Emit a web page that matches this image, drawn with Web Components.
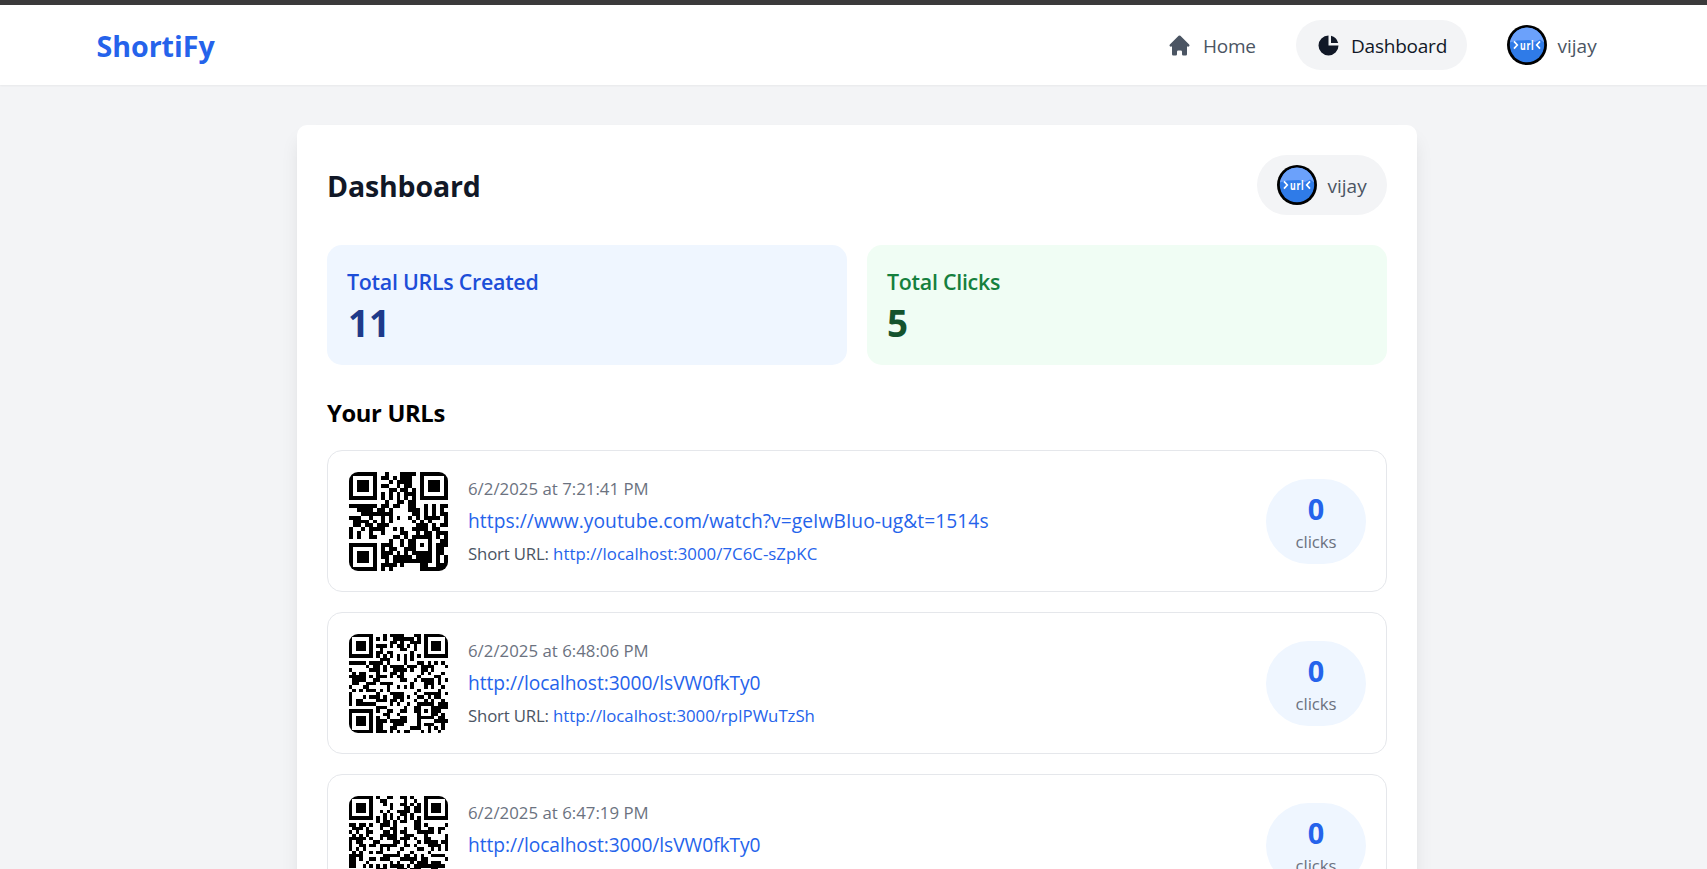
<!DOCTYPE html>
<html lang="en">
<head>
<meta charset="utf-8">
<title>ShortiFy</title>
<style>
html,body{margin:0;height:100%;overflow:hidden}
body{font-family:"Open Sans","Noto Sans",sans-serif;background:#f3f4f6;color:#000}
</style>
</head>
<body>
<app-shell>
  <nav-bar slot="nav"></nav-bar>
  <dash-panel>
    <stat-card slot="stats" style="--bg:#eff6ff;--label:#1d4ed8;--value:#1e3a8a;--vt:1px" label="Total URLs Created" value="11"></stat-card>
    <stat-card slot="stats" style="--bg:#f0fdf4;--label:#15803d;--value:#14532d" label="Total Clicks" value="5"></stat-card>
    <url-item code="a" date="6/2/2025 at 7:21:41 PM" url="https://www.youtube.com/watch?v=geIwBIuo-ug&amp;t=1514s" short="http://localhost:3000/7C6C-sZpKC" style="--track:.06px;--short:.04px"></url-item>
    <url-item mask="2" date="6/2/2025 at 6:48:06 PM" url="http://localhost:3000/lsVW0fkTy0" short="http://localhost:3000/rpIPWuTzSh"></url-item>
    <url-item mask="6" date="6/2/2025 at 6:47:19 PM" url="http://localhost:3000/lsVW0fkTy0" short="http://localhost:3000/lsVW0fkTy0"></url-item>
  </dash-panel>
</app-shell>
<script>
class Base extends HTMLElement{
  connectedCallback(){this.attachShadow({mode:'open'}).innerHTML=this.render()}
  a(n){return (this.getAttribute(n)||'').replace(/&/g,'&amp;')}
}

customElements.define('app-shell',class extends Base{render(){return `
<style>:host{display:flex;flex-direction:column;height:100vh;overflow:hidden}
.strip{height:5px;flex:none;background:#3b3a3b}
main{flex:1;min-height:0;padding:40px 0 0 7px;display:flex;justify-content:center;align-items:flex-start}</style>
<div class="strip"></div><slot name="nav"></slot><main><slot></slot></main>`}});

customElements.define('user-avatar',class extends Base{render(){return `
<style>:host{display:block;width:40px;height:40px;flex:none}svg{display:block}</style>
<svg width="40" height="40" viewBox="0 0 40 40">
<circle cx="20" cy="20" r="20" fill="#000"/><circle cx="20" cy="20" r="17.2" fill="#2f7be8"/>
<path d="M2.9 17.5Q3.2 15.5 3.8 14A17.2 17.2 0 0 1 36.2 14Q36.8 15.5 37.1 17.5L33 14.5L28 17L22 15L10 15.5Z" fill="#6ba1fb"/>
<path d="M7 16.4l3.3 3.6-3.3 3.6M33 16.4l-3.3 3.6 3.3 3.6" fill="none" stroke="#fff" stroke-width="1.7"/>
<text x="13" y="24.6" textLength="14.4" lengthAdjust="spacingAndGlyphs" fill="#fff" font-family="Open Sans, sans-serif" font-size="12.6" font-weight="700" style="letter-spacing:1px">url</text></svg>`}});

customElements.define('user-chip',class extends Base{render(){return `
<style>:host{display:flex;box-sizing:border-box;align-items:center;gap:10px;padding:0 20px;width:130px;height:60px;border-radius:30px;background:var(--chip,transparent);color:#4b5563;font-size:19px;line-height:30px}
span{padding:1px 0 0 .5px}</style><user-avatar></user-avatar><span>vijay</span>`}});

customElements.define('nav-link',class extends Base{render(){const p=this.a('icon')=='home'
 ?'<path fill-rule="evenodd" d="M10.707 2.293a1 1 0 00-1.414 0l-7 7a1 1 0 001.414 1.414L4 10.414V17a1 1 0 001 1h2a1 1 0 001-1v-2a1 1 0 011-1h2a1 1 0 011 1v2a1 1 0 001 1h2a1 1 0 001-1v-6.586l.293.293a1 1 0 001.414-1.414l-7-7z"/>'
 :'<path d="M2 10a8 8 0 018-8v8h8a8 8 0 11-16 0z"/><path d="M12 2.252A8.014 8.014 0 0117.748 8H12V2.252z"/>';return `
<style>:host{display:flex;box-sizing:border-box;align-items:center;gap:10px;height:50px;padding:0 20px;border-radius:25px;color:#4b5563;font-size:19px;line-height:30px;letter-spacing:-.22px}
:host([active]){background:#f3f4f6;color:#111827}
svg{flex:none;width:25px;height:25px;fill:currentColor}span{padding-top:1px}:host([icon=home]) span{padding-left:1px}</style>
<svg viewBox="0 0 20 20">${p}</svg><span><slot></slot></span>`}});

customElements.define('nav-bar',class extends Base{render(){return `
<style>:host{display:flex;flex:none;box-sizing:border-box;height:80px;align-items:center;justify-content:space-between;padding:0 90px 0 96.4px;background:#fff;box-shadow:0 1px 2px rgba(0,0,0,.05)}
.logo{font-size:28.6px;font-weight:700;line-height:40px;color:#2563eb;padding-top:2px}
nav{display:flex;align-items:center;gap:20px}
.home{width:129px}.dash{width:171px}</style>
<div class="logo">ShortiFy</div>
<nav><nav-link class="home" icon="home">Home</nav-link><nav-link class="dash" icon="pie" active>Dashboard</nav-link><user-chip></user-chip></nav>`}});

customElements.define('stat-card',class extends Base{render(){return `
<style>:host{display:block;box-sizing:border-box;height:120px;padding:20px;border-radius:15px;background:var(--bg)}
.l{font-size:21.4px;line-height:34px;font-weight:600;letter-spacing:-.27px;color:var(--label)}
.v{font-size:36.8px;line-height:49px;font-weight:700;color:var(--value);padding-left:var(--vt,0)}</style>
<div class="l">${this.a('label')}</div><div class="v">${this.a('value')}</div>`}});

customElements.define('dash-panel',class extends Base{render(){return `
<style>:host{display:block;box-sizing:border-box;width:1120px;padding:30px;border-radius:10px;background:#fff;box-shadow:0 12.5px 18.75px -3.75px rgba(0,0,0,.1),0 5px 7.5px -5px rgba(0,0,0,.1)}
header{display:flex;align-items:center;justify-content:space-between;height:60px;margin-bottom:30px}
h1{margin:0;padding-top:1px;font-size:28.5px;line-height:40px;letter-spacing:-.16px;color:#111827}
.stats{display:grid;grid-template-columns:1fr 1fr;gap:20px;margin-bottom:30px}
h2{margin:0 0 20px;height:35px;font-size:23.75px;line-height:37px;letter-spacing:-.34px}
.list{display:grid;gap:20px}user-chip{--chip:#f3f4f6}</style>
<header><h1>Dashboard</h1><user-chip></user-chip></header>
<div class="stats"><slot name="stats"></slot></div><h2>Your URLs</h2><div class="list"><slot></slot></div>`}});

/* Byte-mode QR encoder, version 3, error correction level L. */
const EXP=[],LOG=[];for(let i=0,v=1;i<255;i++){EXP[i]=v;LOG[v]=i;v<<=1;if(v&256)v^=0x11d}
const mul=(a,b)=>a&&b?EXP[(LOG[a]+LOG[b])%255]:0;
function frame(N,set){
  for(let i=0;i<N;i++){set(6,i,i%2==0);set(i,6,i%2==0)}
  for(const[cx,cy]of[[3,3],[N-4,3],[3,N-4]])for(let y=-4;y<=4;y++)for(let x=-4;x<=4;x++){const q=Math.max(Math.abs(x),Math.abs(y));set(cx+x,cy+y,q!=2&&q!=4)}
  for(let y=-2;y<=2;y++)for(let x=-2;x<=2;x++)set(N-7+x,N-7+y,Math.max(Math.abs(x),Math.abs(y))!=1);
}
function encode(text,mask){
  const nd=55,ne=15,N=29,bits=[];
  const put=(x,n)=>{for(let i=n-1;i>=0;i--)bits.push(x>>i&1)};
  const by=[...new TextEncoder().encode(text)];put(4,4);put(by.length,8);by.forEach(b=>put(b,8));
  put(0,4);while(bits.length%8)bits.push(0);for(let p=0xec;bits.length<nd*8;p^=0xfd)put(p,8);
  const d=[];for(let i=0;i<nd;i++)d.push(parseInt(bits.slice(i*8,i*8+8).join(''),2));
  const g=Array(ne).fill(0);g[ne-1]=1;let r=1;
  for(let i=0;i<ne;i++){for(let j=0;j<ne;j++){g[j]=mul(g[j],r);if(j+1<ne)g[j]^=g[j+1]}r=mul(r,2)}
  const e=Array(ne).fill(0);for(const b of d){const f=b^e.shift();e.push(0);g.forEach((c,i)=>e[i]^=mul(c,f))}
  const all=d.concat(e),m=[...Array(N)].map(()=>Array(N).fill(0)),F=m.map(r=>r.slice());
  const set=(x,y,b)=>{if(x>=0&&y>=0&&x<N&&y<N){m[y][x]=b?1:0;F[y][x]=1}};
  frame(N,set);
  const fd=8|mask;let rem=fd;for(let i=0;i<10;i++)rem=rem<<1^(rem>>9)*0x537;
  const fb=(fd<<10|rem)^0x5412,gb=i=>fb>>i&1;
  for(let i=0;i<=5;i++)set(8,i,gb(i));set(8,7,gb(6));set(8,8,gb(7));set(7,8,gb(8));for(let i=9;i<15;i++)set(14-i,8,gb(i));
  for(let i=0;i<8;i++)set(N-1-i,8,gb(i));for(let i=8;i<15;i++)set(8,N-15+i,gb(i));set(8,N-8,1);
  let k=0;
  for(let R=N-1;R>=1;R-=2){if(R==6)R=5;for(let t=0;t<N;t++)for(let j=0;j<2;j++){
    const x=R-j,y=((R+1)&2)==0?N-1-t:t;if(F[y][x])continue;
    const b=k<all.length*8?all[k>>3]>>(7-(k&7))&1:0;k++;
    m[y][x]=b^([(x+y)%2,y%2,x%3,(x+y)%3,(Math.floor(x/3)+Math.floor(y/2))%2,x*y%2+x*y%3,(x*y%2+x*y%3)%2,((x+y)%2+x*y%3)%2][mask]==0)}}
  return m;
}
/* Stored module maps, one row per string. */
const STORED={a:[
'.........#...####........',
'........##.#.###.........',
'..........#.####.........',
'........##..#.##.........',
'..........##.##.#........',
'........#.#.#.###........',
'.........................',
'.........#..##.##........',
'######..##.##..##..#.#.##',
'..####.##.#....###.#.#.#.',
'...###.####.....##.#.#.##',
'###..##.#.#.#..#.#.####.#',
'.####...#.#.....#.#.#...#',
'.##.##.###.......###.#.##',
'#..#.####..#.#..####.##..',
'#.#..#..#....##..#.##.###',
'#.#..#.....##.#.#####.#.#',
'..........#..#.##...#..##',
'........###..#.##.#.#.###',
'........#.##..##...#..##.',
'........###.#.#.#####.##.',
'........##.#####.####.#.#',
'.........#.##########.#.#',
'........####.#....##..###',
'........#.#.......#######']};
customElements.define('qr-code',class extends Base{render(){
  let m;const s=STORED[this.a('code')];
  if(s){m=s.map(r=>[...r].map(c=>c=='#'?1:0));const N=m.length;frame(N,(x,y,b)=>{if(m[y]&&x>=0&&x<N)m[y][x]=b?1:0})}
  else m=encode(this.getAttribute('value'),+this.a('mask'));
  const N=m.length;
  return `<style>:host{display:block;width:100px;height:100px;flex:none}svg{display:block;width:99px;height:99px;margin:.5px 0 0 .5px;border-radius:9px}</style>
<svg viewBox="0 0 ${N} ${N}" shape-rendering="crispEdges"><path d="${m.map((r,y)=>r.map((b,x)=>b?`M${x} ${y}h1v1h-1z`:'').join('')).join('')}"/></svg>`}});

customElements.define('click-count',class extends Base{render(){return `
<style>:host{display:block;box-sizing:border-box;width:100px;height:85px;padding:10px 0;border-radius:42.5px;background:#eff6ff;text-align:center}
b{display:block;font-size:28.8px;line-height:40px;color:#2563eb}
span{display:block;font-size:16.8px;line-height:25px;letter-spacing:-.1px;color:#6b7280}</style>
<b>0</b><span>clicks</span>`}});

customElements.define('url-item',class extends Base{render(){return `
<style>:host{display:flex;box-sizing:border-box;height:142px;padding:20px;gap:20px;align-items:center;border:1px solid #e5e7eb;border-radius:15px;background:#fff}
.t{flex:1;font-size:16.8px;line-height:25px}
.d{color:#6b7280;letter-spacing:.02px}
.u{font-size:19.2px;line-height:30px;margin:5px 0 5px;color:#2563eb;letter-spacing:var(--track,-.06px)}
.s{color:#4b5563;letter-spacing:-.17px}.s span{color:#2563eb;letter-spacing:var(--short,-.03px)}</style>
<qr-code code="${this.a('code')}" mask="${this.a('mask')}" value="${this.a('short')}"></qr-code>
<div class="t"><div class="d">${this.a('date')}</div><div class="u">${this.a('url')}</div><div class="s">Short URL: <span>${this.a('short')}</span></div></div>
<click-count></click-count>`}});
</script>
</body>
</html>
